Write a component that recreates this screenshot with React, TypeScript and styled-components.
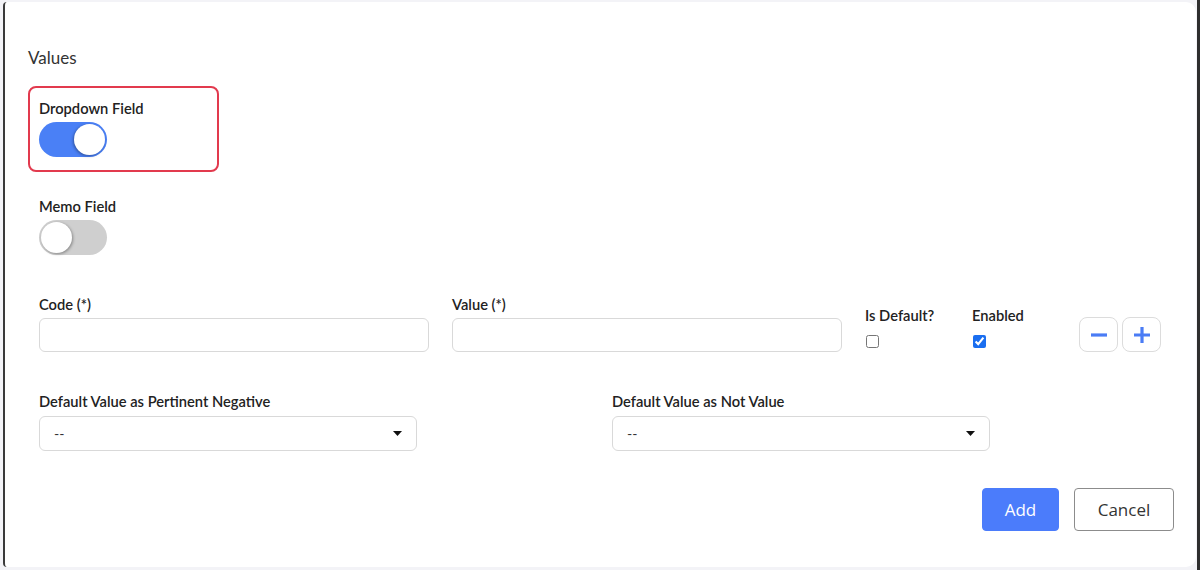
import styled, { createGlobalStyle } from 'styled-components';

const GlobalStyle = createGlobalStyle`
  html, body {
    margin: 0;
    padding: 0;
    background: #f3f3f7;
  }
  * {
    box-sizing: border-box;
  }
`;

const Frame = styled.div`
  width: 1200px;
  height: 570px;
  padding: 2px 1px 3px 3px;
  border-right: 3px solid #2e2e2e;
  background: #f3f3f7;
  font-family: Lato, 'Noto Sans', sans-serif;
`;

const Card = styled.div`
  height: 100%;
  background: #fff;
  border-left: 2px solid #3a3a3a;
  border-radius: 4px 10px 10px 4px;
  padding: 46px 22px 0 23px;
  display: flex;
  flex-direction: column;
`;

const Title = styled.div`
  font-size: 17px;
  line-height: 20px;
  color: #333;
  margin-bottom: 18px;
`;

const FieldBox = styled.div<{ highlight?: boolean; offset?: number }>`
  width: 191px;
  margin-top: ${(p) => p.offset ?? 0}px;
  border: 2px solid ${(p) => (p.highlight ? '#e23a4e' : 'transparent')};
  border-radius: 8px;
  padding: 11px 9px 13px 9px;
  display: flex;
  flex-direction: column;
  gap: 5px;
`;

const Label = styled.div`
  font-size: 14.7px;
  line-height: 18px;
  font-weight: 600;
  color: #222;
  white-space: nowrap;
`;

const Switch = styled.div<{ on?: boolean }>`
  position: relative;
  width: 68px;
  height: 35px;
  border-radius: 18px;
  background: ${(p) => (p.on ? '#4a80f6' : '#cfcfcf')};
`;

const Thumb = styled.div<{ on?: boolean }>`
  position: absolute;
  top: 2px;
  left: ${(p) => (p.on ? '35px' : '2px')};
  width: 31px;
  height: 31px;
  border-radius: 50%;
  background: #fff;
  box-shadow: ${(p) =>
    p.on ? '-1px 1px 3px rgba(0,0,0,0.35)' : '1px 1px 3px rgba(0,0,0,0.35)'};
`;

const Fields = styled.div`
  padding-left: 11px;
  display: flex;
  flex-direction: column;
`;

const CodeRow = styled.div`
  margin-top: 25px;
  display: grid;
  grid-template-columns: 390px 390px 84px 84px auto;
  column-gap: 23px;
  align-items: end;
`;

const Field = styled.div<{ gap?: number }>`
  display: flex;
  flex-direction: column;
  gap: ${(p) => p.gap ?? 5}px;
`;

const Input = styled.div`
  height: 34px;
  border: 1px solid #d9d9d9;
  border-radius: 6px;
  background: #fff;
`;

const Check = styled.input`
  width: 13px;
  height: 13px;
  margin: 0 0 4px 1px;
  accent-color: #1a6ef0;
`;

const IconButtons = styled.div`
  display: flex;
  gap: 4px;
`;

const IconButton = styled.button`
  width: 39px;
  height: 35px;
  padding: 0;
  border: 1px solid #dcdcdc;
  border-radius: 8px;
  background: #fff;
  display: flex;
  align-items: center;
  justify-content: center;
`;

const SelectRow = styled.div`
  margin-top: 40px;
  display: grid;
  grid-template-columns: 550px 550px;
  column-gap: 23px;
`;

const Select = styled.div`
  width: 378px;
  height: 35px;
  border: 1px solid #d9d9d9;
  border-radius: 6px;
  padding: 0 14px 0 14px;
  display: flex;
  align-items: center;
  justify-content: space-between;
  font-size: 14px;
  color: #333;
`;

const Actions = styled.div`
  margin-top: 37px;
  display: flex;
  justify-content: flex-end;
  gap: 15px;
`;

const Button = styled.button<{ primary?: boolean }>`
  height: 43px;
  padding: 0;
  width: ${(p) => (p.primary ? '77px' : '100px')};
  border-radius: 4px;
  border: 1px solid ${(p) => (p.primary ? '#4b7cfb' : '#8c8c8c')};
  background: ${(p) => (p.primary ? '#4b7cfb' : '#fff')};
  color: ${(p) => (p.primary ? '#fff' : '#333')};
  font-family: 'Open Sans', 'Noto Sans', sans-serif;
  font-size: 17px;
`;

const Caret = () => (
  <svg width="9" height="5" viewBox="0 0 9 5">
    <path d="M0 0h9L4.5 5z" fill="#111" />
  </svg>
);

const App = () => {
  return (
    <Frame>
      <GlobalStyle />
      <Card>
        <Title>Values</Title>
        <FieldBox highlight>
          <Label>Dropdown Field</Label>
          <Switch on>
            <Thumb on />
          </Switch>
        </FieldBox>
        <FieldBox offset={12}>
          <Label>Memo Field</Label>
          <Switch>
            <Thumb />
          </Switch>
        </FieldBox>
        <Fields>
          <CodeRow>
            <Field>
              <Label>Code (*)</Label>
              <Input />
            </Field>
            <Field>
              <Label>Value (*)</Label>
              <Input />
            </Field>
            <Field gap={11}>
              <Label>Is Default?</Label>
              <Check type="checkbox" readOnly />
            </Field>
            <Field gap={11}>
              <Label>Enabled</Label>
              <Check type="checkbox" checked readOnly />
            </Field>
            <IconButtons>
              <IconButton>
                <svg width="18" height="18" viewBox="0 0 18 18">
                  <path d="M1 9h16" stroke="#4a7cf5" strokeWidth="3.2" />
                </svg>
              </IconButton>
              <IconButton>
                <svg width="18" height="18" viewBox="0 0 18 18">
                  <path d="M1 9h16M9 1v16" stroke="#4a7cf5" strokeWidth="3.2" />
                </svg>
              </IconButton>
            </IconButtons>
          </CodeRow>
          <SelectRow>
            <Field gap={6}>
              <Label>Default Value as Pertinent Negative</Label>
              <Select>
                <span>--</span>
                <Caret />
              </Select>
            </Field>
            <Field gap={6}>
              <Label>Default Value as Not Value</Label>
              <Select>
                <span>--</span>
                <Caret />
              </Select>
            </Field>
          </SelectRow>
        </Fields>
        <Actions>
          <Button primary>Add</Button>
          <Button>Cancel</Button>
        </Actions>
      </Card>
    </Frame>
  );
};

export default App;
